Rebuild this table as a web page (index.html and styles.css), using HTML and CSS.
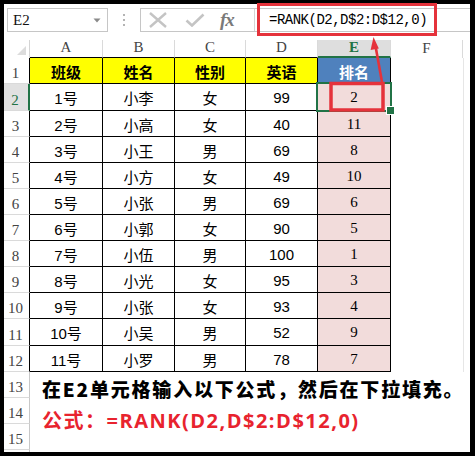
FILE: index.html
```html
<!DOCTYPE html>
<html lang="zh-CN">
<head>
<meta charset="utf-8">
<title>RANK</title>
<link rel="stylesheet" href="styles.css">
</head>
<body>
<div class="frame">
  <div class="fbar">
    <div class="namebox">
      <span class="nb-text">E2</span>
      <svg class="nb-arrow" width="8" height="5" viewBox="0 0 8 5"><path d="M0.5 0.5H7.5L4 4.5Z" fill="#8a8a8a"/></svg>
    </div>
    <div class="grip"><i></i><i></i><i></i></div>
    <div class="fx-wrap">
      <div class="fx-btns">
        <svg class="ico" width="20" height="16" viewBox="0 0 20 16"><path d="M2 1L18 15M18 1L2 15" stroke="#c4c4c4" stroke-width="2.4" fill="none"/></svg>
        <svg class="ico" width="20" height="14" viewBox="0 0 20 14"><path d="M1.5 7.5L7 12.5L18.5 1.5" stroke="#c4c4c4" stroke-width="2.6" fill="none"/></svg>
        <span class="fx">fx</span>
      </div>
      <div class="finput">=RANK(D2,D$2:D$12,0)</div>
    </div>
  </div>

  <div class="sheet">
    <div class="corner"><svg width="9" height="9" viewBox="0 0 9 9"><path d="M9 0V9H0Z" fill="#dcdcdc"/></svg></div>
    <div class="ch">A</div><div class="ch">B</div><div class="ch">C</div><div class="ch">D</div><div class="ch ch-sel">E</div><div class="ch ch-f">F</div><div class="ch ch-end"></div>

    <div class="rh top">1</div><div class="c hd y">班级</div><div class="c hd y">姓名</div><div class="c hd y">性别</div><div class="c hd y">英语</div><div class="c hd blue">排名</div><div class="pad"></div>
    <div class="rh top rh-sel">2</div><div class="c">1号</div><div class="c">小李</div><div class="c">女</div><div class="c">99</div><div class="c e sel">2</div><div class="pad"></div>
    <div class="rh top">3</div><div class="c">2号</div><div class="c">小高</div><div class="c">女</div><div class="c">40</div><div class="c e">11</div><div class="pad"></div>
    <div class="rh top">4</div><div class="c">3号</div><div class="c">小王</div><div class="c">男</div><div class="c">69</div><div class="c e">8</div><div class="pad"></div>
    <div class="rh top">5</div><div class="c">4号</div><div class="c">小方</div><div class="c">女</div><div class="c">49</div><div class="c e">10</div><div class="pad"></div>
    <div class="rh top">6</div><div class="c">5号</div><div class="c">小张</div><div class="c">男</div><div class="c">69</div><div class="c e">6</div><div class="pad"></div>
    <div class="rh top">7</div><div class="c">6号</div><div class="c">小郭</div><div class="c">女</div><div class="c">90</div><div class="c e">5</div><div class="pad"></div>
    <div class="rh top">8</div><div class="c">7号</div><div class="c">小伍</div><div class="c">男</div><div class="c">100</div><div class="c e">1</div><div class="pad"></div>
    <div class="rh top">9</div><div class="c">8号</div><div class="c">小光</div><div class="c">女</div><div class="c">95</div><div class="c e">3</div><div class="pad"></div>
    <div class="rh top">10</div><div class="c">9号</div><div class="c">小张</div><div class="c">女</div><div class="c">93</div><div class="c e">4</div><div class="pad"></div>
    <div class="rh top">11</div><div class="c">10号</div><div class="c">小吴</div><div class="c">男</div><div class="c">52</div><div class="c e">9</div><div class="pad"></div>
    <div class="rh top">12</div><div class="c">11号</div><div class="c">小罗</div><div class="c">男</div><div class="c">78</div><div class="c e">7</div><div class="pad"></div>

    <div class="rh">13</div><div class="note note-black">在E2单元格输入以下公式，然后在下拉填充。</div>
    <div class="rh">14</div><div class="note note-red">公式：=RANK(D2,D$2:D$12,0)</div>
    <div class="rh">15</div><div class="note"></div>
    <div class="rh rh-last"></div><div class="note"></div>
  </div>
</div>

<svg class="annot" width="475" height="459" viewBox="0 0 475 459">
  <rect x="258.5" y="4.5" width="177" height="30" fill="none" stroke="#e5323b" stroke-width="3"/>
  <rect x="331" y="83.5" width="52" height="26.5" fill="none" stroke="#e5323b" stroke-width="3.5"/>
  <path d="M382 82L375.5 46" stroke="#e5323b" stroke-width="2.6" fill="none"/>
  <path d="M373.5 37L378.8 48.5L370.6 50Z" fill="#e5323b"/>
</svg>
</body>
</html>
```

FILE: styles.css
```css
* { box-sizing: border-box; }

html, body {
  margin: 0;
  padding: 0;
  background: #fff;
}

body {
  position: relative;
  width: 475px;
  height: 459px;
  overflow: hidden;
  font-family: "Liberation Sans", "Noto Sans CJK SC", sans-serif;
  color: #000;
}

.frame {
  width: 475px;
  height: 456px;
  border: solid #000;
  border-width: 4px 5px 4px 4px;
  background: #fff;
  display: flex;
  flex-direction: column;
  overflow: hidden;
}

/* ---------- formula bar ---------- */
.fbar {
  flex: none;
  height: 36px;
  display: flex;
  align-items: flex-start;
  padding: 4px 0 0 3px;
}

.namebox {
  width: 101px;
  height: 24px;
  border: 1px solid #c6c6c6;
  display: flex;
  align-items: center;
  justify-content: space-between;
  padding: 0 6px 0 5px;
}

.nb-text {
  font-family: "Liberation Serif", serif;
  font-size: 15px;
  color: #111;
}

.nb-arrow { display: block; }

.grip {
  width: 32px;
  height: 24px;
  display: flex;
  flex-direction: column;
  align-items: center;
  justify-content: center;
  gap: 3px;
}

.grip i {
  display: block;
  width: 2px;
  height: 2px;
  background: #b4b4b4;
}

.fx-wrap {
  flex: 1;
  height: 24px;
  display: flex;
  border: 1px solid #c6c6c6;
  border-right: none;
}

.fx-btns {
  width: 113px;
  display: flex;
  align-items: center;
  padding-left: 7px;
  gap: 17px;
}

.ico { display: block; }

.fx {
  font-family: "Liberation Serif", serif;
  font-style: italic;
  font-weight: bold;
  font-size: 19px;
  color: #7a7a7a;
  margin-left: -2px;
  letter-spacing: -1px;
}

.finput {
  flex: 1;
  border-left: 1px solid #d4d4d4;
  padding-left: 14px;
  font-family: "Liberation Mono", monospace;
  font-size: 14px;
  letter-spacing: -0.5px;
  line-height: 22px;
  color: #000;
}

/* ---------- sheet ---------- */
.sheet {
  flex: 1;
  display: grid;
  grid-template-columns: 26px 73px 72px 71px 72px 73px 72px 7px;
  grid-template-rows: 18px 26px 27px 26px 26px 26px 26px 26px 26px 26px 26px 27px 26px 26px 26px 26px 1fr;
}

.corner {
  display: flex;
  align-items: flex-end;
  justify-content: flex-end;
  padding: 0 3px 3px 0;
  border-right: 1px solid #d4d4d4;
}

.corner svg { display: block; }

.ch {
  display: flex;
  align-items: flex-end;
  justify-content: center;
  padding-bottom: 1px;
  font-family: "Liberation Serif", serif;
  font-size: 15px;
  color: #444;
  border-right: 1px solid #dadada;
  border-bottom: 1px solid #000;
}

.ch-f, .ch-end { border-bottom: none; }
.ch-end { border-right: none; }

.ch-sel {
  background: #dedede;
  color: #217346;
  font-weight: bold;
  border-bottom: 2px solid #217346;
  padding-bottom: 0;
}

.rh {
  display: flex;
  align-items: flex-end;
  justify-content: center;
  padding: 0 2px 1px 0;
  font-family: "Liberation Serif", serif;
  font-size: 15px;
  color: #444;
  border-bottom: 1px solid #dadada;
  border-right: 1px solid #c8c8c8;
}

.rh.top { border-right-color: #000; }

.rh-sel {
  background: #e1e1e1;
  color: #217346;
  border-right: 2px solid #217346 !important;
}

.rh-last { border-bottom: none; }

.c {
  display: flex;
  align-items: center;
  justify-content: center;
  font-size: 15px;
  border-right: 1px solid #000;
  border-bottom: 1px solid #000;
  padding-top: 1px;
}

.hd {
  font-family: "Noto Sans CJK SC", sans-serif;
  font-weight: bold;
  font-size: 15px;
}

.y { background: #ffff00; }

.blue {
  background: #4f81bd;
  color: #fff;
}

.e {
  background: #f2dcdb;
  font-family: "Liberation Serif", serif;
  font-size: 15px;
}

.sel { position: relative; }

.sel::after {
  content: "";
  position: absolute;
  left: -2px;
  top: -2px;
  right: -2px;
  bottom: -2px;
  border: 2px solid #217346;
}

.sel::before {
  content: "";
  position: absolute;
  right: -5px;
  bottom: -5px;
  width: 7px;
  height: 7px;
  background: #217346;
  border: 1px solid #fff;
  z-index: 1;
}

.pad {
  grid-column: span 2;
  border-right: 1px solid #e6e6e6;
  margin-right: 6px;
}

.note {
  grid-column: 2 / -1;
  display: flex;
  align-items: center;
  padding-left: 12px;
  white-space: nowrap;
}

.note-black {
  font-family: "Noto Sans CJK SC", sans-serif;
  font-weight: 900;
  font-size: 19px;
  letter-spacing: 1.8px;
  color: #000;
  padding-top: 6px;
}

.note-red {
  font-family: "Open Sans", "Noto Sans CJK SC", sans-serif;
  font-weight: bold;
  font-size: 20px;
  letter-spacing: 1.5px;
  color: #e8232e;
  padding-top: 16px;
}

.annot {
  position: absolute;
  left: 0;
  top: 0;
  pointer-events: none;
}
```
